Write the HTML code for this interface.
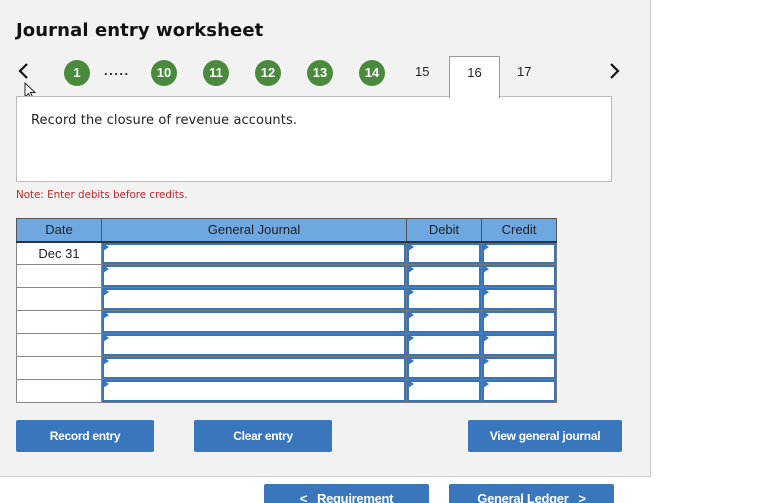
<!DOCTYPE html>
<html><head><style>
*{margin:0;padding:0;box-sizing:border-box}
html,body{width:759px;height:503px;overflow:hidden}
body{background:#fff;position:relative;font-family:"Liberation Sans",Arial,sans-serif}
.panel{position:absolute;left:0;top:0;width:651px;height:477px;background:#f2f2f2;border-right:1px solid #ccc;border-bottom:1px solid #ccc}
.abs{position:absolute}
h1{position:absolute;left:16px;top:20px;font:bold 18px "DejaVu Sans",Verdana,sans-serif;color:#111;letter-spacing:0.1px}
.c{position:absolute;top:60px;width:26px;height:26px;border-radius:50%;background:#4a8a3c;color:#fff;font-size:13px;text-align:center;line-height:26px;font-weight:bold}
.n{position:absolute;top:64px;font-size:13px;color:#222}
.tab{position:absolute;left:449px;top:56px;width:51px;height:42px;background:#fff;border:1px solid #999;border-bottom:none;z-index:2;text-align:center;line-height:32px;font-size:13px;color:#222}
.box{position:absolute;left:16px;top:96px;width:596px;height:86px;background:#fff;border:1px solid #bbb}
.note{position:absolute;left:16px;top:189px;font:10.3px "DejaVu Sans",Verdana,sans-serif;color:#c0282d}
table{position:absolute;left:16px;top:218px;border-collapse:collapse;font-size:13px}
th{background:#6fa8e0;color:#222;font-weight:normal;height:23px;border:1px solid #555;border-bottom:2px solid #333}
td{height:23px;border:1px solid #888;background:#fff;position:relative;padding:0}
td.d{text-align:center;color:#222}
td.i{border:1px solid #777}
td.i::after{content:"";position:absolute;left:0;top:0;right:0;bottom:0;border:2px solid #3a74b8}
td.i::before{content:"";position:absolute;left:1px;top:0;border-left:6px solid #3a74b8;border-top:4px solid transparent;border-bottom:4px solid transparent;z-index:1}
.btn{position:absolute;background:#3a76bb;color:#fff;font-weight:bold;font-size:12px;text-align:center;border-radius:2px;letter-spacing:-0.3px}
</style></head><body>
<div class="panel"></div>
<h1>Journal entry worksheet</h1>
<svg class="abs" style="left:17px;top:62px" width="14" height="18"><path d="M10 2 L3 9 L10 16" stroke="#111" stroke-width="2.2" fill="none"/></svg>
<svg class="abs" style="left:607px;top:62px" width="14" height="18"><path d="M4 2 L11 9 L4 16" stroke="#111" stroke-width="2.2" fill="none"/></svg>
<svg class="abs" style="left:24px;top:82px" width="14" height="20"><path d="M1 1 L1 15 L4.5 11.5 L7 17 L9 16 L6.5 10.5 L11 10.5 Z" fill="#fff" stroke="#222" stroke-width="1"/></svg>
<div class="c" style="left:64px">1</div>
<div class="n" style="left:104px;top:63px;font-weight:bold;letter-spacing:1.5px">.....</div>
<div class="c" style="left:151px">10</div>
<div class="c" style="left:203px">11</div>
<div class="c" style="left:255px">12</div>
<div class="c" style="left:307px">13</div>
<div class="c" style="left:359px">14</div>
<div class="n" style="left:415px">15</div>
<div class="tab">16</div>
<div class="n" style="left:517px">17</div>
<div class="box"><div style="position:absolute;left:14px;top:16px;font:13px 'DejaVu Sans',Verdana,sans-serif;color:#222;letter-spacing:0.1px">Record the closure of revenue accounts.</div></div>
<div class="note">Note: Enter debits before credits.</div>
<table>
<tr><th style="width:85px">Date</th><th style="width:305px">General Journal</th><th style="width:75px">Debit</th><th style="width:75px">Credit</th></tr>
<tr><td class="d">Dec 31</td><td class="i"></td><td class="i"></td><td class="i"></td></tr>
<tr><td class="d"></td><td class="i"></td><td class="i"></td><td class="i"></td></tr>
<tr><td class="d"></td><td class="i"></td><td class="i"></td><td class="i"></td></tr>
<tr><td class="d"></td><td class="i"></td><td class="i"></td><td class="i"></td></tr>
<tr><td class="d"></td><td class="i"></td><td class="i"></td><td class="i"></td></tr>
<tr><td class="d"></td><td class="i"></td><td class="i"></td><td class="i"></td></tr>
<tr><td class="d"></td><td class="i"></td><td class="i"></td><td class="i"></td></tr>
</table>
<div class="btn" style="left:16px;top:420px;width:138px;height:32px;line-height:32px">Record entry</div>
<div class="btn" style="left:194px;top:420px;width:138px;height:32px;line-height:32px">Clear entry</div>
<div class="btn" style="left:468px;top:420px;width:154px;height:32px;line-height:32px">View general journal</div>
<div class="btn" style="left:264px;top:484px;width:165px;height:30px;line-height:30px;font-size:13px">&lt;&nbsp;&nbsp;&nbsp;Requirement</div>
<div class="btn" style="left:449px;top:484px;width:165px;height:30px;line-height:30px;font-size:13px">General Ledger&nbsp;&nbsp;&nbsp;&gt;</div>
</body></html>
